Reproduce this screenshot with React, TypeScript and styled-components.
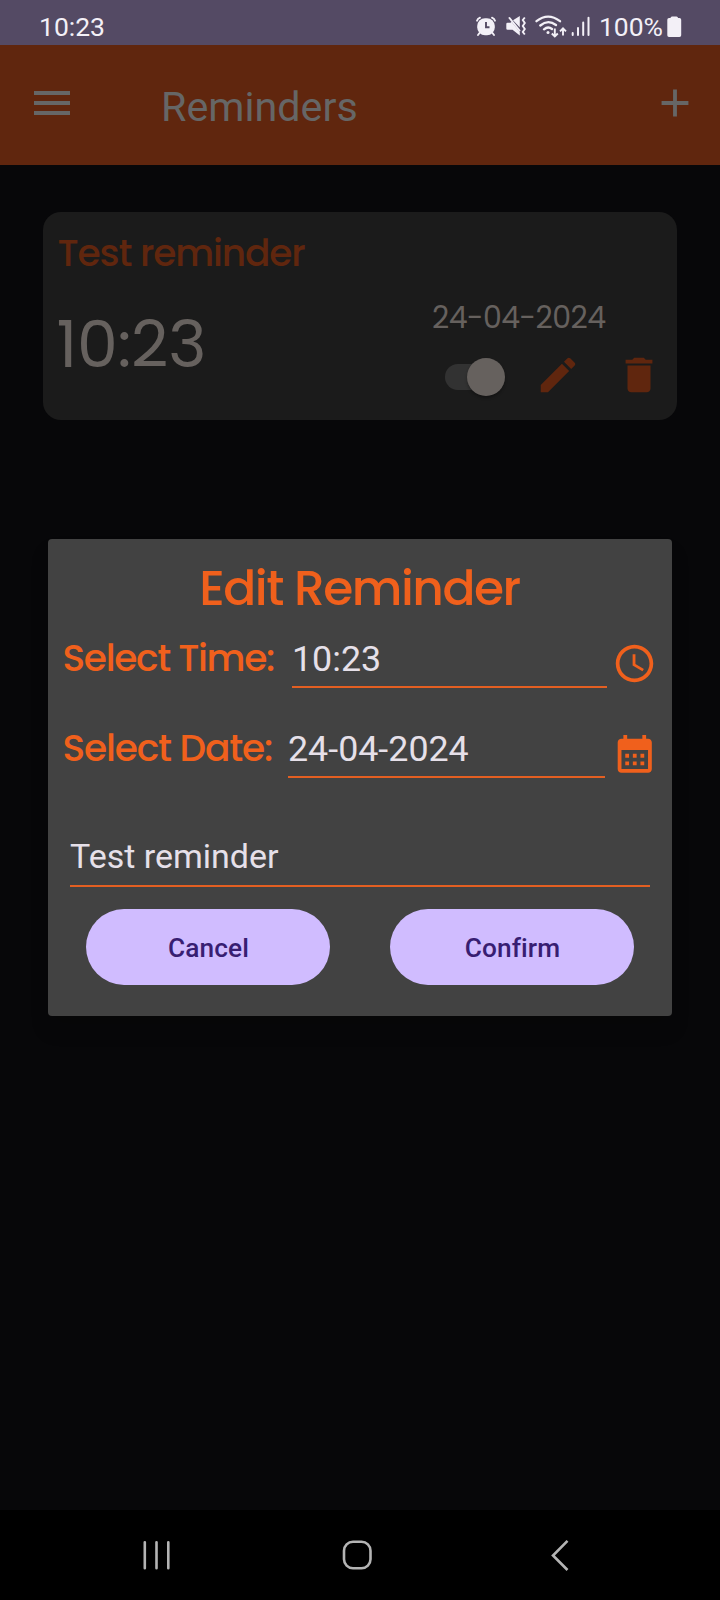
import React from 'react';
import styled, { createGlobalStyle } from 'styled-components';

const geometric = `Poppins, Inter, 'Open Sans', sans-serif`;

const GlobalStyle = createGlobalStyle`
  * { box-sizing: border-box; }
  html, body { margin: 0; padding: 0; background: #070709; }
  body { font-family: Roboto, 'Liberation Sans', sans-serif; }
`;

const Screen = styled.div`
  position: relative;
  width: 720px;
  height: 1600px;
  display: flex;
  flex-direction: column;
  overflow: hidden;
  background: #070709;
`;

const StatusBar = styled.div`
  height: 45px;
  flex: none;
  padding: 8px 38px 0 39px;
  display: flex;
  align-items: center;
  justify-content: space-between;
  background: #544a64;
  color: #f3f0f7;
  font-size: 26.5px;
  line-height: 32px;
`;

const Clock = styled.span`
  letter-spacing: 0;
`;

const StatusIcons = styled.div`
  display: flex;
  align-items: center;
  height: 36px;
  svg { display: block; flex: none; }
`;

const Percent = styled.span`
  margin: 0 4px 0 8px;
`;

const AppBar = styled.header`
  height: 120px;
  flex: none;
  padding: 0 22px 4px 28px;
  display: flex;
  align-items: center;
  background: #60260e;
  color: #666;
  svg { display: block; }
`;

const AppTitle = styled.h1`
  margin: 8px auto 0 85px;
  font-size: 41.25px;
  line-height: 48px;
  font-weight: 400;
`;

const Content = styled.main`
  flex: 1;
  padding: 47px 43px;
`;

const Card = styled.section`
  height: 208px;
  padding: 13px 0 0 14.5px;
  border-radius: 18px;
  background: #1b1b1b;
  color: #66615e;
  font-family: ${geometric};
`;

const CardTitle = styled.h2`
  margin: 0;
  font-size: 37.5px;
  line-height: 56px;
  font-weight: 500;
  letter-spacing: -0.03em;
  color: #60260e;
`;

const CardBody = styled.div`
  display: flex;
  justify-content: space-between;
`;

const CardTime = styled.div`
  margin: 24px 0 0 -1px;
  font-size: 65px;
  line-height: 80px;
  letter-spacing: -0.3px;
`;

const CardSide = styled.div`
  width: 246px;
  margin-top: 19px;
  display: flex;
  flex-direction: column;
  gap: 16px;
`;

const CardDate = styled.div`
  padding-left: 1px;
  font-size: 30px;
  line-height: 36px;
  letter-spacing: -0.55px;
`;

const Controls = styled.div`
  height: 46px;
  padding-left: 14px;
  display: flex;
  align-items: center;
  color: #60260e;
  svg { display: block; flex: none; }
`;

const Switch = styled.div`
  width: 60px;
  height: 26px;
  margin: 4px 30px 0 0;
  display: flex;
  flex: none;
  align-items: center;
  justify-content: flex-end;
  border-radius: 13px;
  background: linear-gradient(to right, #323232 42px, transparent 42px);
`;

const Thumb = styled.span`
  width: 38px;
  height: 38px;
  flex: none;
  border-radius: 50%;
  background: #66615e;
  box-shadow: 0 2px 3px rgba(0, 0, 0, 0.3);
`;

const IconGap = styled.span`
  width: 35px;
  flex: none;
`;

const Overlay = styled.div`
  position: absolute;
  inset: 0;
  padding: 539px 48px 0;
`;

const Dialog = styled.div`
  height: 477px;
  padding-top: 19px;
  border-radius: 4px;
  background: #424242;
  box-shadow: 0 14px 18px rgba(0, 0, 0, 0.15);
`;

const DialogTitle = styled.h2`
  margin: 0 0 19px;
  padding-right: 1px;
  text-align: center;
  font: 500 48.75px/60px ${geometric};
  letter-spacing: -0.031em;
  color: #f0601c;
`;

const FieldRow = styled.div<{ $gap: number; $drop: number }>`
  height: 51px;
  margin-bottom: ${(p) => p.$gap}px;
  padding-left: 14.5px;
  display: flex;
  align-items: flex-start;
  color: #f0601c;
  svg { display: block; margin-top: ${(p) => p.$drop}px; flex: none; }
`;

const Label = styled.label<{ $width: number; $tracking: number }>`
  width: ${(p) => p.$width}px;
  flex: none;
  white-space: nowrap;
  font: 500 37.5px/42px ${geometric};
  letter-spacing: ${(p) => p.$tracking}px;
`;

const Field = styled.div<{ $width: number; $right: number }>`
  width: ${(p) => p.$width}px;
  height: 51px;
  margin-right: ${(p) => p.$right}px;
  flex: none;
  border-bottom: 2px solid #e35f22;
  font-size: 35.8px;
  line-height: 44px;
  color: #e6e0e9;
`;

const NameField = styled(Field)`
  margin-left: 22px;
  font-size: 34px;
  line-height: 41px;
`;

const Buttons = styled.div`
  margin-top: 22px;
  display: flex;
  justify-content: center;
  gap: 60px;
`;

const PillButton = styled.button`
  width: 244px;
  height: 76px;
  padding: 2px 0 0 1px;
  border: 0;
  border-radius: 38px;
  background: #d0bcff;
  color: #381e72;
  font: 500 26.25px/32px Roboto, sans-serif;
  letter-spacing: 0.1px;
`;

const NavBar = styled.nav`
  height: 90px;
  flex: none;
  padding-left: 141px;
  display: flex;
  align-items: center;
  background: #000;
  color: #b4b4b4;
  svg { display: block; }
  svg + svg { margin-left: 170px; }
  svg + svg + svg { margin-left: 177px; }
`;

const Icon = ({ d, size }: { d: string; size: number }) => (
  <svg width={size} height={size} viewBox="0 0 24 24" fill="currentColor">
    <path d={d} />
  </svg>
);

const menuPath = 'M3 18h18v-2H3v2zm0-5h18v-2H3v2zm0-7v2h18V6H3z';
const addPath = 'M19 13h-6v6h-2v-6H5v-2h6V5h2v6h6v2z';
const editPath =
  'M3 17.25V21h3.75L17.81 9.94l-3.75-3.75L3 17.25zM20.71 7.04c.39-.39.39-1.02 0-1.41l-2.34-2.34c-.39-.39-1.02-.39-1.41 0l-1.83 1.83 3.75 3.75 1.83-1.83z';
const deletePath =
  'M6 19c0 1.1.9 2 2 2h8c1.1 0 2-.9 2-2V7H6v12zM19 4h-3.5l-1-1h-5l-1 1H5v2h14V4z';
const clockPath =
  'M11.99 2C6.47 2 2 6.48 2 12s4.47 10 9.99 10C17.52 22 22 17.52 22 12S17.52 2 11.99 2zM12 20c-4.42 0-8-3.58-8-8s3.58-8 8-8 8 3.58 8 8-3.58 8-8 8zM12.5 7H11v6l5.25 3.15.75-1.23-4.5-2.67z';
const calendarPath =
  'M7 11H9V13H7V11M21 5V19C21 20.11 20.11 21 19 21H5C3.89 21 3 20.1 3 19V5C3 3.9 3.9 3 5 3H6V1H8V3H16V1H18V3H19C20.11 3 21 3.9 21 5M5 19H19V9H5V19M15 13V11H17V13H15M11 13V11H13V13H11M7 15H9V17H7V15M15 17V15H17V17H15M11 17V15H13V17H11Z';

// Alarm, muted speaker, wi-fi with traffic arrows and signal strength
const StatusGlyphs = () => (
  <svg width="116" height="24" viewBox="475 14.500 116 24" fill="currentColor">
    <rect x="477.200" y="17.800" width="17.600" height="17" rx="7.800" />
    <path d="M479.500 32.500l-1.500 2M492.500 32.500l1.500 2M477 20.200q.6-2.200 3-3M495 20.200q-.6-2.200-3-3" fill="none" stroke="currentColor" strokeWidth="1.900" strokeLinecap="round" />
    <path d="M486 21.500v5.300h3.500" fill="none" stroke="#544a64" strokeWidth="1.900" />
    <path d="M507.500 22.200h3l1-1 8.300 10.300v3.500l-7.300-5.700h-5q-1.200 0-1.200-1.200v-4.700q0-1.200 1.200-1.200zM513 19.800l6.800-4.300v11.500z" />
    <path d="M509.500 17.500l10 12.500" stroke="currentColor" strokeWidth="2" strokeLinecap="round" />
    <path d="M524.800 17l-2 2.500 2 3-2 3 2 3-2 3 2 2.500" fill="none" stroke="currentColor" strokeWidth="1.900" />
    <g fill="none" stroke="currentColor" strokeWidth="2.300" strokeLinecap="round">
      <path d="M536.500 20.700Q548 11.500 560 20.700M540.300 25Q548 18.500 556 24.500M544 28.800Q548 25.300 552 28.500" />
    </g>
    <circle cx="548" cy="32" r="1.500" />
    <path d="M554.800 28v8M551.800 33l3 3 3-3M563 35v-7.500M560 30.800l3-3 3 3" fill="none" stroke="currentColor" strokeWidth="1.900" />
    <path d="M572.700 32.500v2M578 27.500v7M583.200 22v12.500M588.500 17.300v17.200" fill="none" stroke="currentColor" strokeWidth="2" strokeLinecap="round" />
  </svg>
);

const Battery = () => (
  <svg width="15" height="22" viewBox="0 0 15 22" fill="currentColor">
    <path d="M3.500 2q0-1.500 1.500-1.500h4.500Q11 .5 11 2h1.500q1.700 0 1.700 1.700v15.600q0 1.700-1.700 1.700H2Q.3 21 .3 19.300V3.700Q.3 2 2 2z" />
  </svg>
);

export default function App() {
  return (
    <>
      <GlobalStyle />
      <Screen>
        <StatusBar>
          <Clock>10:23</Clock>
          <StatusIcons>
            <StatusGlyphs />
            <Percent>100%</Percent>
            <Battery />
          </StatusIcons>
        </StatusBar>
        <AppBar>
          <Icon d={menuPath} size={48} />
          <AppTitle>Reminders</AppTitle>
          <Icon d={addPath} size={46} />
        </AppBar>
        <Content>
          <Card>
            <CardTitle>Test reminder</CardTitle>
            <CardBody>
              <CardTime>10:23</CardTime>
              <CardSide>
                <CardDate>24-04-2024</CardDate>
                <Controls>
                  <Switch>
                    <Thumb />
                  </Switch>
                  <Icon d={editPath} size={46} />
                  <IconGap />
                  <Icon d={deletePath} size={46} />
                </Controls>
              </CardSide>
            </CardBody>
          </Card>
        </Content>
        <NavBar>
          <svg width="30" height="32" viewBox="0 0 30 32" stroke="currentColor" strokeWidth="2.6" strokeLinecap="round">
            <path d="M3.800 3.300v26M15.500 3.300v26M27.300 3.300v26" />
          </svg>
          <svg width="32" height="32" viewBox="0 0 32 32" fill="none" stroke="currentColor" strokeWidth="2.6">
            <rect x="3" y="2.800" width="26.500" height="26.500" rx="9" />
          </svg>
          <svg width="20" height="32" viewBox="0 0 20 32" fill="none" stroke="currentColor" strokeWidth="2.6">
            <path d="M17.500 1.800L3 16.500 17.500 31" />
          </svg>
        </NavBar>
        <Overlay>
          <Dialog>
            <DialogTitle>Edit Reminder</DialogTitle>
            <FieldRow $gap={39} $drop={4}>
              <Label $width={229.5} $tracking={-1.33}>Select Time:</Label>
              <Field $width={315} $right={5}>10:23</Field>
              <Icon d={clockPath} size={45} />
            </FieldRow>
            <FieldRow $gap={58} $drop={5.5}>
              <Label $width={225.5} $tracking={-1.15}>Select Date:</Label>
              <Field $width={317} $right={7}>24-04-2024</Field>
              <Icon d={calendarPath} size={45.5} />
            </FieldRow>
            <NameField $width={580} $right={0}>Test reminder</NameField>
            <Buttons>
              <PillButton>Cancel</PillButton>
              <PillButton>Confirm</PillButton>
            </Buttons>
          </Dialog>
        </Overlay>
      </Screen>
    </>
  );
}
